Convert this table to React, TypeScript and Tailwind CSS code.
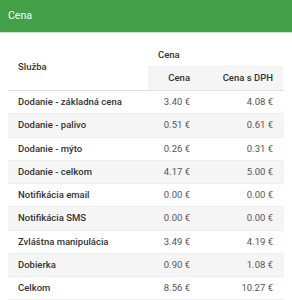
import React from "react";

const rows: [string, string, string][] = [
  ["Dodanie - základná cena", "3.40 €", "4.08 €"],
  ["Dodanie - palivo", "0.51 €", "0.61 €"],
  ["Dodanie - mýto", "0.26 €", "0.31 €"],
  ["Dodanie - celkom", "4.17 €", "5.00 €"],
  ["Notifikácia email", "0.00 €", "0.00 €"],
  ["Notifikácia SMS", "0.00 €", "0.00 €"],
  ["Zvláštna manipulácia", "3.49 €", "4.19 €"],
  ["Dobierka", "0.90 €", "1.08 €"],
  ["Celkom", "8.56 €", "10.27 €"],
];

export default function App() {
  return (
    <div
      className="w-[292px] h-[300px] overflow-hidden bg-white"
      style={{ fontFamily: "Roboto, 'Noto Sans', sans-serif" }}
    >
      <div className="h-[33px] bg-[#43a047] border-b border-[#c8e6c9] flex items-center px-2 text-[10.5px] text-white">
        Cena
      </div>
      <div className="mx-2 mt-[11px] text-[9.5px] text-[#333]">
        <div className="grid grid-cols-[140px_52px_83px] border-b border-[#e0e0e0]">
          <div className="row-span-2 flex items-center pl-[10px] font-medium">
            Služba
          </div>
          <div className="col-span-2 h-[22px] flex items-center pl-[10px] font-medium">
            Cena
          </div>
          <div className="h-[24px] bg-[#f5f5f5] border-t border-[#eeeeee] flex items-center justify-end pr-[10px] font-medium">
            Cena
          </div>
          <div className="h-[24px] bg-[#f5f5f5] border-t border-[#eeeeee] flex items-center justify-end pr-[10px] font-medium">
            Cena s DPH
          </div>
        </div>
        {rows.map((r, i) => (
          <div
            key={i}
            className={
              "grid grid-cols-[140px_52px_83px] h-[23.25px] border-b border-[#eeeeee] " +
              (i % 2 === 1 ? "bg-[#f5f5f5]" : "bg-white")
            }
          >
            <div className="flex items-center pl-[10px] font-medium">{r[0]}</div>
            <div className="flex items-center justify-end pr-[10px] text-[#555]">{r[1]}</div>
            <div className="flex items-center justify-end pr-[10px] text-[#555]">{r[2]}</div>
          </div>
        ))}
      </div>
    </div>
  );
}
